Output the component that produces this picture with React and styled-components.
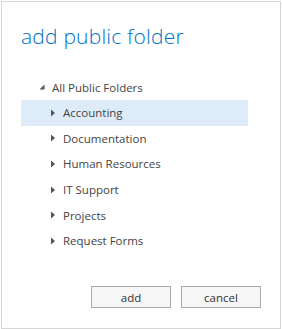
import React from 'react'
import styled, { createGlobalStyle } from 'styled-components'

const folders = ['Accounting', 'Documentation', 'Human Resources', 'IT Support', 'Projects', 'Request Forms']

const GlobalStyle = createGlobalStyle`
  body {
    margin: 0;
    background: #ffffff;
    font-family: "Open Sans", "Noto Sans", sans-serif;
  }
`

const Dialog = styled.div`
  box-sizing: border-box;
  margin: 1px 0 0 1px;
  width: 280px;
  height: 328px;
  border: 1px solid #d6d6d6;
  background: #fff;
  display: flex;
  flex-direction: column;
  padding: 20px 0 0 19px;
`

const Title = styled.h1`
  margin: 0;
  font-size: 21px;
  font-weight: 300;
  color: #0072c6;
  line-height: 28px;
  letter-spacing: 0.2px;
`

const Tree = styled.div`
  margin-top: 24px;
  width: 227px;
  display: flex;
  flex-direction: column;
`

const Row = styled.div`
  display: flex;
  align-items: center;
  height: ${(p) => p.h || '25.6px'};
  padding-left: ${(p) => p.indent}px;
  background: ${(p) => (p.selected ? '#deecf9' : 'transparent')};
  font-size: 11.5px;
  color: #444;
`

const Arrow = styled.svg`
  width: 6px;
  height: 8px;
  margin-right: 7px;
  flex-shrink: 0;
`

const Footer = styled.div`
  margin-top: auto;
  margin-bottom: 20px;
  padding-right: 19px;
  display: flex;
  justify-content: flex-end;
  gap: 10px;
`

const Button = styled.button`
  box-sizing: border-box;
  width: 80px;
  height: 22px;
  border: 1px solid #a5aaaa;
  background: #f6f6f6;
  color: #333;
  font-family: "Open Sans", "Noto Sans", sans-serif;
  font-size: 11.5px;
  padding: 0;
`

const Expanded = () => (
  <Arrow viewBox="0 0 6 8">
    <polygon points="0.5,6.5 5.5,6.5 5.5,1.5" fill="#555" />
  </Arrow>
)

const Collapsed = () => (
  <Arrow viewBox="0 0 6 8">
    <polygon points="1,0.5 5,4 1,7.5" fill="#555" />
  </Arrow>
)

export default function App() {
  return (
    <>
      <GlobalStyle />
      <Dialog>
        <Title>add public folder</Title>
        <Tree>
          <Row indent={18} h="26px">
            <Expanded />
            All Public Folders
          </Row>
          {folders.map((f, i) => (
            <Row key={f} indent={29} selected={i === 0}>
              <Collapsed />
              {f}
            </Row>
          ))}
        </Tree>
        <Footer>
          <Button>add</Button>
          <Button>cancel</Button>
        </Footer>
      </Dialog>
    </>
  )
}
